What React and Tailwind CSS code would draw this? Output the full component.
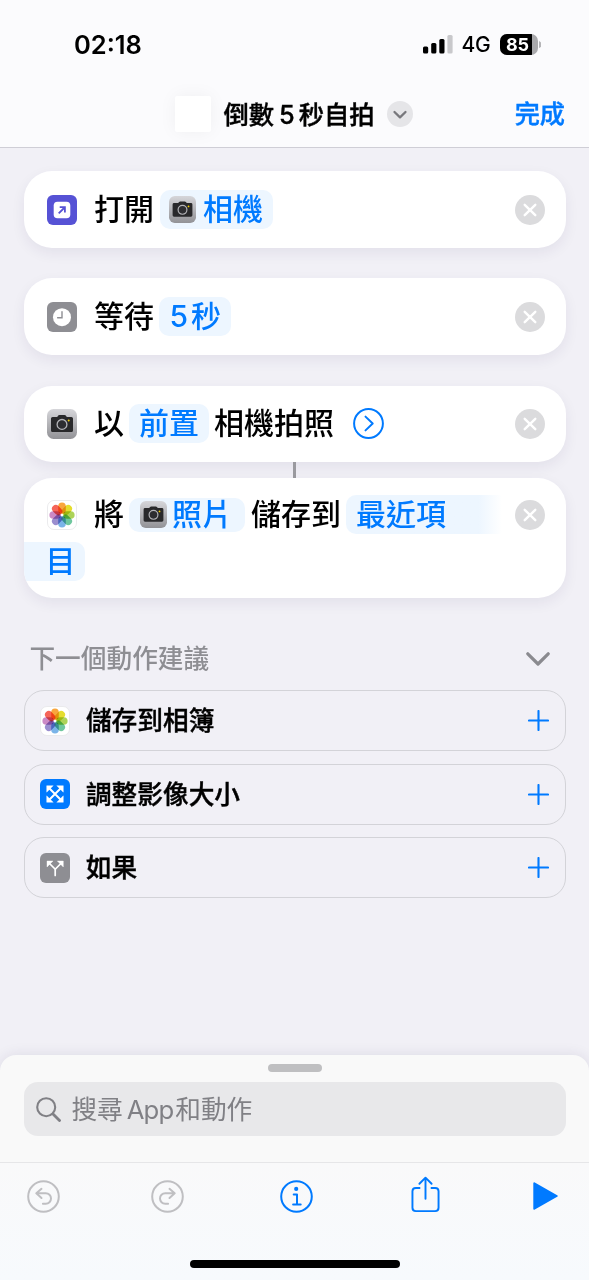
import clsx from 'clsx';

const PETALS = ['#f99f2c', '#e3da1c', '#a6d04a', '#63c296', '#6faee6', '#9184cb', '#c77fc0', '#f5584a'];

const CameraIcon = ({ className }) => (
  <svg className={clsx('shrink-0', className)} viewBox="0 0 30 30">
    <defs>
      <linearGradient id="camera-bg" x1="0" y1="0" x2="0" y2="1">
        <stop offset="0" stopColor="#d6d6da" />
        <stop offset="1" stopColor="#929296" />
      </linearGradient>
    </defs>
    <rect width="30" height="30" rx="6.5" fill="url(#camera-bg)" />
    <path
      d="M5.6 7.9h4.600l1-1.300q.4-.6 1.300-.6h5q.9 0 1.300.6l1 1.300h4.600q1.600 0 1.600 1.600v11.900q0 1.600-1.600 1.600H5.600Q4 23 4 21.400V9.500q0-1.600 1.600-1.600Z"
      fill="#29292b"
    />
    <circle cx="15" cy="15.400" r="4.900" fill="#2d2d30" stroke="#b4b4b8" strokeWidth="1.300" />
    <circle cx="21.700" cy="11.600" r="1" fill="#f5d000" />
  </svg>
);

const PhotosIcon = ({ className }) => (
  <svg className={clsx('shrink-0', className)} viewBox="0 0 30 30">
    <rect x=".5" y=".5" width="29" height="29" rx="6.500" fill="#fff" stroke="#e6e6e8" strokeWidth=".8" />
    <g style={{ isolation: 'isolate' }}>
      {PETALS.map((color, i) => (
        <rect
          key={color}
          x="11.200"
          y="2.400"
          width="7.600"
          height="11.300"
          rx="3.800"
          fill={color}
          opacity=".92"
          style={{ mixBlendMode: 'multiply' }}
          transform={`rotate(${i * 45} 15 15)`}
        />
      ))}
    </g>
  </svg>
);

const OpenAppIcon = ({ className }) => (
  <svg className={clsx('shrink-0', className)} viewBox="0 0 30 30">
    <rect width="30" height="30" rx="6" fill="#5652d5" />
    <rect x="6.700" y="6.800" width="16.600" height="16.400" rx="3.800" fill="#fff" />
    <path d="M11.700 18.400l5.400-5.400M12.700 12.200h5.200v5.200" fill="none" stroke="#5652d5" strokeWidth="1.800" />
  </svg>
);

const ClockIcon = ({ className }) => (
  <svg className={clsx('shrink-0', className)} viewBox="0 0 30 30">
    <rect width="30" height="30" rx="6" fill="#8e8e93" />
    <circle cx="15" cy="15.200" r="9" fill="#fff" />
    <path d="M15 9.800v5.900h-4.400" fill="none" stroke="#8e8e93" strokeWidth="1.400" strokeLinecap="round" />
  </svg>
);

const ResizeIcon = ({ className }) => (
  <svg className={clsx('shrink-0', className)} viewBox="0 0 30 30">
    <rect width="30" height="30" rx="6" fill="#007aff" />
    <path d="M9 9l12 12M21 9L9 21" stroke="#fff" strokeWidth="2" />
    <path
      d="M6.700 6.700h6.500l-6.500 6.500ZM23.300 6.700v6.500l-6.500-6.500ZM23.300 23.300h-6.500l6.500-6.500ZM6.700 23.300v-6.500l6.500 6.500Z"
      fill="#fff"
      stroke="#fff"
      strokeWidth=".4"
      strokeLinejoin="round"
    />
  </svg>
);

const BranchIcon = ({ className }) => (
  <svg className={clsx('shrink-0', className)} viewBox="0 0 30 30">
    <rect width="30" height="30" rx="6" fill="#8e8e93" />
    <path d="M15.200 22.500v-5.300q0-1-.7-1.700L9 10M15.200 17.200q0-1 .7-1.700L21.400 10" fill="none" stroke="#fff" strokeWidth="1.700" strokeLinecap="round" />
    <path d="M7 8h6l-6 6ZM23.300 8v6l-6-6Z" fill="#fff" stroke="#fff" strokeWidth=".4" strokeLinejoin="round" />
  </svg>
);

const DeleteButton = () => (
  <button type="button" className="ml-auto shrink-0">
    <svg className="block size-[30px]" viewBox="0 0 30 30">
      <circle cx="15" cy="15" r="15" fill="#dbdbdd" />
      <path d="M9.700 9.800l10.600 10.400M20.300 9.800L9.700 20.200" stroke="#fff" strokeWidth="2.400" strokeLinecap="round" />
    </svg>
  </button>
);

const Chip = ({ className, children }) => (
  <span className={clsx('flex shrink-0 items-center rounded-[10px] bg-[#edf6ff] text-[#007aff]', className)}>
    {children}
  </span>
);

const ActionCard = ({ className, children }) => (
  <div className={clsx('overflow-hidden rounded-[28px] bg-white shadow-[0_5px_14px_rgba(40,30,80,0.07)]', className)}>
    {children}
  </div>
);

const ActionRow = ({ icon: Icon, className, children }) => (
  <div className={clsx('flex items-center pl-[22.5px] pr-[20.500px] text-[30px] font-medium leading-[39px]', className)}>
    <Icon className="mr-[17px] size-[30px]" />
    {children}
    <DeleteButton />
  </div>
);

const SuggestionRow = ({ icon: Icon, label }) => (
  <div className="flex h-[61px] items-center rounded-[20px] border-[1.5px] border-[#d3d3d8] pl-[14.5px] pr-4">
    <Icon className="mr-4 size-[30px]" />
    <span className="pt-px text-[25.7px] font-medium leading-9 [-webkit-text-stroke:0.4px]">{label}</span>
    <svg className="ml-auto size-[21px]" viewBox="0 0 21 21">
      <path d="M10.500 1v19M1 10.500h19" stroke="#007aff" strokeWidth="2.100" strokeLinecap="round" />
    </svg>
  </div>
);

const StatusBar = () => (
  <div className="flex h-[81px] items-center pl-[74px] pr-12 pt-2">
    <span className="text-[25.500px] font-semibold leading-8">02:18</span>
    <svg className="ml-auto h-[19px] w-[30px]" viewBox="0 0 30 19">
      <rect x="0" y="11.500" width="5.200" height="7" rx="1.500" />
      <rect x="8.200" y="8" width="5.200" height="10.500" rx="1.500" />
      <rect x="16.300" y="4" width="5.200" height="14.500" rx="1.500" />
      <rect x="24.400" y="0" width="5.200" height="18.500" rx="1.500" fill="#c8c8cb" />
    </svg>
    <span className="ml-2 text-[21px] font-medium leading-6 tracking-[-0.2px]">4G</span>
    <div className="ml-[9px] flex h-[21px] w-[38px] items-center overflow-hidden rounded-[7px] bg-[#a9a9ac]">
      <span className="flex h-full w-8 items-center justify-center bg-black pl-1 text-[18px] font-bold leading-none text-white">85</span>
    </div>
    <svg className="ml-px h-[7px] w-[2.500px]" viewBox="0 0 2.500 7">
      <path d="M0 0q2.500 1 2.500 3.500T0 7Z" fill="#b5b5b8" />
    </svg>
  </div>
);

const NavBar = () => (
  <div className="flex h-[66px] items-center pl-[175px] pr-6">
    <div className="size-9 rounded-[2px] bg-white shadow-[0_0_18px_rgba(0,0,0,0.05)]" />
    <h1 className="ml-[12.500px] flex pt-px text-[25.300px] font-medium leading-9 [-webkit-text-stroke:0.4px]">
      倒數<span className="ml-[5px] mr-1">5</span>秒自拍
    </h1>
    <button type="button" className="ml-3">
      <svg className="block size-[26px]" viewBox="0 0 26 26">
        <circle cx="13" cy="13" r="13" fill="#e5e5e8" />
        <path d="M7.500 11l5.500 5.300 5.500-5.300" fill="none" stroke="#77777c" strokeWidth="2.300" strokeLinecap="round" strokeLinejoin="round" />
      </svg>
    </button>
    <button type="button" className="ml-auto text-[25.200px] font-medium leading-9 text-[#007aff] [-webkit-text-stroke:0.4px]">
      完成
    </button>
  </div>
);

const Toolbar = () => (
  <div className="flex h-[66px] items-center pl-[27px]">
    <svg className="size-[33px]" viewBox="0 0 33 33" fill="none" stroke="#bfbfc2" strokeWidth="2" strokeLinecap="round" strokeLinejoin="round">
      <circle cx="16.500" cy="16.500" r="15.300" />
      <path d="M14.500 8.800L9.300 13.300l5.200 4.700M9.600 13.300h9.200a5.200 5.200 0 0 1 0 10.400h-2.900" />
    </svg>
    <svg className="ml-[90.500px] size-[33px]" viewBox="0 0 33 33" fill="none" stroke="#bfbfc2" strokeWidth="2" strokeLinecap="round" strokeLinejoin="round">
      <circle cx="16.500" cy="16.500" r="15.300" />
      <path d="M18.500 8.800l5.200 4.500-5.200 4.700M23.400 13.300h-9.200a5.200 5.200 0 0 0 0 10.400h2.900" />
    </svg>
    <svg className="ml-[96.500px] size-[33px]" viewBox="0 0 33 33" fill="none" stroke="#007aff" strokeWidth="2" strokeLinecap="round" strokeLinejoin="round">
      <circle cx="16.500" cy="16.500" r="15.300" />
      <circle cx="16.200" cy="8.900" r="1.100" fill="#007aff" />
      <path d="M13.700 14.600h3.300v9.700M13.100 24.500h7.600" />
    </svg>
    <svg className="mb-[3px] ml-[98px] h-[37px] w-[29px]" viewBox="0 0 30 38" fill="none" stroke="#007aff" strokeWidth="2" strokeLinecap="round" strokeLinejoin="round">
      <path d="M9.600 12.200H5q-3.500 0-3.500 3.500v17q0 3.500 3.500 3.500h20q3.500 0 3.500-3.500v-17q0-3.500-3.500-3.500h-4.600" strokeLinecap="butt" />
      <path d="M15 23.500V2M8.700 7.900L15 1.600l6.300 6.300" />
    </svg>
    <svg className="ml-[93px] h-[28px] w-[25px]" viewBox="0 0 25 28">
      <path d="M1.300 1.300L23.700 14 1.300 26.700Z" fill="#007aff" stroke="#007aff" strokeWidth="2" strokeLinejoin="round" />
    </svg>
  </div>
);

export default function App() {
  return (
    <div className="flex h-[1280px] w-[589px] flex-col overflow-hidden bg-[#f1f0f6] font-[Inter,'Noto_Sans_CJK_TC',sans-serif] text-black">
      <header className="h-[148px] border-b border-[#cfced6] bg-[#fbfbfd]">
        <StatusBar />
        <NavBar />
      </header>

      <main className="flex-1 pl-[24.400px] pr-[23.500px] pt-[23.300px]">
        <ActionCard>
          <ActionRow icon={OpenAppIcon} className="h-[76.500px]">
            打開
            <Chip className="ml-1.5 pl-[9px] pr-2.5">
              <CameraIcon className="mr-[7px] size-[27px]" />
              相機
            </Chip>
          </ActionRow>
        </ActionCard>

        <ActionCard className="mt-[30.700px]">
          <ActionRow icon={ClockIcon} className="h-[76.500px]">
            等待
            <Chip className="ml-[5.500px] px-2.5">
              <span className="mr-[3px]">5</span>秒
            </Chip>
          </ActionRow>
        </ActionCard>

        <ActionCard className="mt-[30.700px]">
          <ActionRow icon={CameraIcon} className="h-[76.500px]">
            以
            <Chip className="ml-[5px] px-2.5">前置</Chip>
            <span className="ml-[5px]">相機拍照</span>
            <svg className="ml-[19.500px] size-[31px]" viewBox="0 0 31 31" fill="none" stroke="#007aff" strokeWidth="2">
              <circle cx="15.500" cy="15.500" r="14.400" />
              <path d="M12.500 8.600l7.200 6.900-7.200 6.900" strokeLinecap="round" strokeLinejoin="round" />
            </svg>
          </ActionRow>
        </ActionCard>

        <div className="mx-auto h-[15.500px] w-[3px] bg-[#9a9a9f]" />

        <ActionCard className="h-[120.500px] pt-[17.500px]">
          <ActionRow icon={PhotosIcon} className="h-[39px]">
            將
            <Chip className="ml-[5px] h-[34px] pl-[11px] pr-[13px]">
              <CameraIcon className="mr-[5px] size-[27px]" />
              照片
            </Chip>
            <span className="ml-1.5">儲存到</span>
            <Chip className="ml-[5px] w-[156px] rounded-r-none bg-transparent bg-linear-to-r from-[#edf6ff] from-85% to-white pl-2.5">
              最近項
            </Chip>
          </ActionRow>
          <Chip className="mt-[7.500px] w-[61px] rounded-l-none pl-[21px] text-[30px] font-medium leading-[39px]">目</Chip>
        </ActionCard>

        <div className="mt-[43px] flex h-9 items-center justify-between pl-[5px] pr-[15.500px]">
          <h2 className="text-[25.700px] font-medium leading-9 text-[#8e8e93]">下一個動作建議</h2>
          <svg className="h-[14px] w-[24px]" viewBox="0 0 24 14">
            <path d="M1.800 1.800L12 12 22.200 1.800" fill="none" stroke="#8a8a8f" strokeWidth="3.200" strokeLinecap="round" strokeLinejoin="round" />
          </svg>
        </div>

        <div className="mt-[13px] flex flex-col gap-[12.500px]">
          <SuggestionRow icon={PhotosIcon} label="儲存到相簿" />
          <SuggestionRow icon={ResizeIcon} label="調整影像大小" />
          <SuggestionRow icon={BranchIcon} label="如果" />
        </div>
      </main>

      <footer className="h-[225px] rounded-t-2xl bg-[#f9f9f9] shadow-[0_0_14px_rgba(40,30,80,0.1)]">
        <div className="flex h-[107px] flex-col pl-[24.400px] pr-[23.500px] pt-[9px]">
          <div className="mx-auto h-2 w-[54px] rounded-full bg-[#bfbfc1]" />
          <div className="mt-2.5 flex h-[54px] items-center rounded-[14px] bg-[#e8e8ea] pl-[11.500px] text-[25.700px] leading-9 text-[#808085]">
            <svg className="mr-[10.500px] size-[25px]" viewBox="0 0 25 25" fill="none" stroke="#808085" strokeLinecap="round">
              <circle cx="10.200" cy="10.200" r="9" strokeWidth="2.100" />
              <path d="M17 17l6.500 6.500" strokeWidth="2.900" />
            </svg>
            <span className="flex pt-0.5">
              搜尋<span className="ml-1 mr-0.5 tracking-[-0.900px]">App</span>和動作
            </span>
          </div>
        </div>
        <div className="h-[118px] border-t border-[#e6e6e8] bg-linear-to-b from-[#f9f9fa] to-[#f7fafd]">
          <Toolbar />
          <div className="mx-auto mt-[31px] h-2 w-[210px] rounded-full bg-black" />
        </div>
      </footer>
    </div>
  );
}
